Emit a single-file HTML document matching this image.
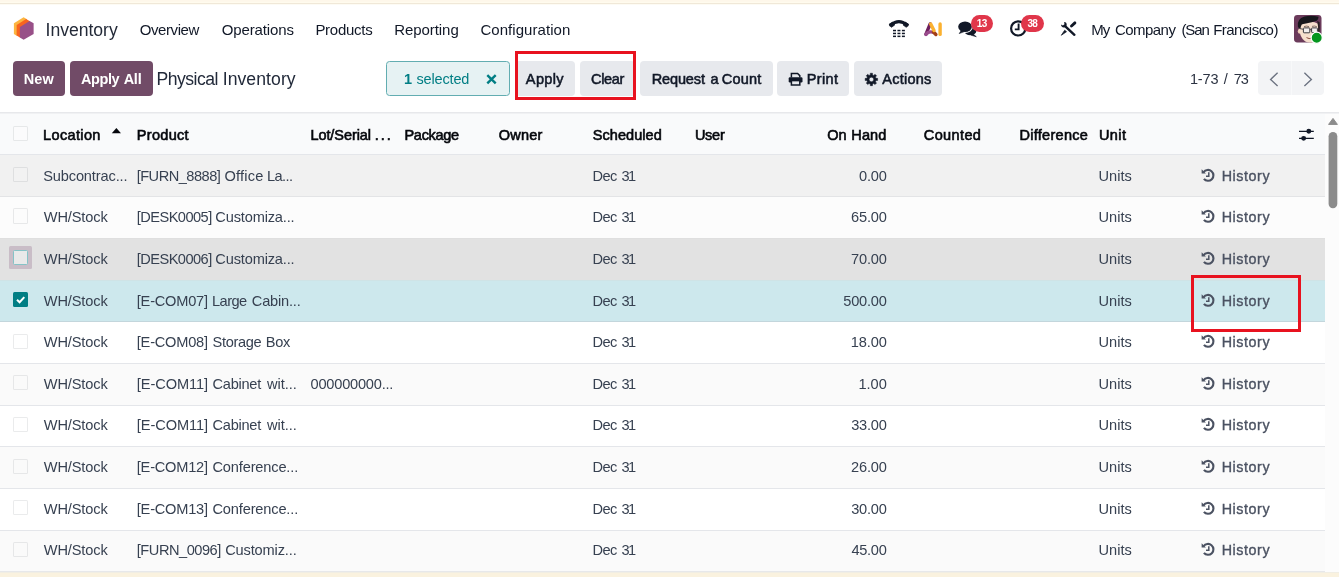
<!DOCTYPE html>
<html><head><meta charset="utf-8"><title>Physical Inventory</title><style>
html,body{margin:0;padding:0;}
body{width:1339px;height:577px;overflow:hidden;background:#fff;position:relative;font-family:"Liberation Sans",sans-serif;}
.t{position:absolute;white-space:nowrap;line-height:1;}
.b{position:absolute;box-sizing:border-box;}
svg{position:absolute;overflow:visible;}
#app{position:absolute;left:0;top:0;width:1339px;height:577px;overflow:hidden;will-change:transform;}
</style></head><body>
<div id="app">
<div class="b" style="left:0px;top:0px;width:1339px;height:1px;background:#fef7ea;"></div>
<div class="b" style="left:0px;top:1px;width:1339px;height:1px;background:#fef8eb;"></div>
<div class="b" style="left:0px;top:2px;width:1339px;height:1px;background:#fffbee;"></div>
<div class="b" style="left:0px;top:3px;width:1339px;height:1px;background:#f0e8d8;"></div>
<div class="b" style="left:0px;top:4px;width:1339px;height:1px;background:#fdfbf4;"></div>
<svg style="left:10px;top:14px;" width="28" height="30" viewBox="0 0 539 577.5"><polygon points="75,180 262,62 320,98 320,300 128,420 75,385" fill="#fcb540"/><polygon points="128,212 310,95 385,140 385,300 190,452 128,415" fill="#f8641f"/><polygon points="190,250 378,135 455,180 455,385 262,497 190,450" fill="#985088"/></svg>
<span class="t" style="font-size:17.6px;top:22px;color:#232a38;letter-spacing:-0.029px;left:45.59px;">Inventory</span>
<span class="t" style="font-size:15px;top:22px;color:#111827;letter-spacing:-0.408px;left:139.70px;">Overview</span>
<span class="t" style="font-size:15px;top:22px;color:#111827;letter-spacing:-0.116px;left:221.70px;">Operations</span>
<span class="t" style="font-size:15px;top:22px;color:#111827;letter-spacing:-0.262px;left:315.38px;">Products</span>
<span class="t" style="font-size:15px;top:22px;color:#111827;letter-spacing:-0.059px;left:394.18px;">Reporting</span>
<span class="t" style="font-size:15px;top:22px;color:#111827;letter-spacing:0.050px;left:480.45px;">Configuration</span>
<span class="t" style="font-size:15px;top:22px;color:#111827;letter-spacing:-0.966px;left:1091.18px;">My</span>
<span class="t" style="font-size:15px;top:22px;color:#111827;letter-spacing:-0.556px;left:1115.05px;">Company</span>
<span class="t" style="font-size:15px;top:22px;color:#111827;letter-spacing:-1.099px;left:1181.38px;">(San</span>
<span class="t" style="font-size:15px;top:22px;color:#111827;letter-spacing:-0.531px;left:1213.18px;">Francisco)</span>
<svg style="left:0px;top:0px;" width="1339" height="60" viewBox="0 0 1339 60"><path d="M890.6,25.0 Q898.9,18.2 907.2,25.0" fill="none" stroke="#111827" stroke-width="3.0" stroke-linecap="round"/><path d="M889.2,24.2 l3.6,-2.2 l1.9,3.0 l-3.3,2.3 z M908.6,24.2 l-3.6,-2.2 l-1.9,3.0 l3.3,2.3 z" fill="#111827" stroke="#111827" stroke-width="0.8" stroke-linejoin="round"/><rect x="893.00" y="29.80" width="3.0" height="1.5" fill="#111827"/><rect x="893.00" y="32.70" width="3.0" height="1.5" fill="#111827"/><rect x="893.00" y="35.60" width="3.0" height="1.5" fill="#111827"/><rect x="897.45" y="29.80" width="3.0" height="1.5" fill="#111827"/><rect x="897.45" y="32.70" width="3.0" height="1.5" fill="#111827"/><rect x="897.45" y="35.60" width="3.0" height="1.5" fill="#111827"/><rect x="901.90" y="29.80" width="3.0" height="1.5" fill="#111827"/><rect x="901.90" y="32.70" width="3.0" height="1.5" fill="#111827"/><rect x="901.90" y="35.60" width="3.0" height="1.5" fill="#111827"/></svg>
<svg style="left:0px;top:0px;" width="1339" height="60" viewBox="0 0 1339 60"><g fill="none" stroke-width="3.4" stroke-linecap="round" stroke-linejoin="round"><path d="M930.2,23.9 L925.9,34.3" stroke="#6d1f5e"/><path d="M925.9,34.4 Q928.6,30.9 932.9,32.2" stroke="#9a4c8d"/><path d="M933.4,32.0 L935.9,34.5" stroke="#a23e17"/><path d="M930.7,23.9 L934.0,30.4" stroke="#fbb130"/><path d="M940.1,24.0 L940.1,34.4" stroke="#fbb130"/></g></svg>
<svg style="left:0px;top:0px;" width="1339" height="60" viewBox="0 0 1339 60"><ellipse cx="970.3" cy="30.9" rx="6.0" ry="4.3" fill="#111827"/><path d="M973.0,34.0 l3.3,2.7 l-5.0,-1.4 z" fill="#111827" stroke="#111827" stroke-width="0.6" stroke-linejoin="round"/><ellipse cx="965.0" cy="26.8" rx="7.9" ry="6.2" fill="#fff"/><ellipse cx="965.05" cy="26.8" rx="6.85" ry="5.2" fill="#111827"/><path d="M961.2,30.6 l-2.0,3.0 l4.6,-1.8 z" fill="#111827" stroke="#111827" stroke-width="0.6" stroke-linejoin="round"/></svg>
<svg style="left:0px;top:0px;" width="1339" height="60" viewBox="0 0 1339 60"><circle cx="1018.2" cy="28.4" r="7.1" fill="none" stroke="#111827" stroke-width="2.2"/><path d="M1018.6,23.6 V29.4 H1014.8" fill="none" stroke="#111827" stroke-width="1.9"/></svg>
<div class="b" style="left:971.2px;top:14.7px;width:21.9px;height:17.5px;background:#e0364a;border-radius:9px;"></div>
<span class="t" style="font-size:10px;top:19px;color:#fff;letter-spacing:-0.341px;font-weight:700;left:976.63px;">13</span>
<div class="b" style="left:1021.1px;top:14.7px;width:22.8px;height:17.5px;background:#e0364a;border-radius:9px;"></div>
<span class="t" style="font-size:10px;top:19px;color:#fff;letter-spacing:-0.809px;font-weight:700;left:1027.38px;">38</span>
<svg style="left:0px;top:0px;" width="1339" height="60" viewBox="0 0 1339 60"><g fill="none" stroke="#111827" stroke-linecap="round"><path d="M1065.6,26.6 L1074.4,34.8" stroke-width="2.4"/><path d="M1074.9,22.9 L1071.5,26.0" stroke-width="2.9"/></g><path d="M1066.5,31.7 L1064.7,30.2 L1061.3,35.3 Z" fill="#111827" stroke="#111827" stroke-width="0.7" stroke-linejoin="round"/><path d="M1061.1,24.6 a2.8,2.8 0 1 0 3.0,-2.7 l0.4,2.4 l-1.6,1.2 z" fill="#111827"/></svg>
<svg style="left:1294.1px;top:15px;" width="27.5" height="27.5" viewBox="0 0 27.5 27.5"><rect x="0" y="0" width="27.5" height="27.5" rx="3.4" fill="#6b3b5b"/><ellipse cx="5.3" cy="16.3" rx="1.5" ry="2.4" fill="#efcdb6"/><path d="M5.3,11 Q4.8,19 8.6,24 Q11.5,27.5 15.5,27.5 L23,27.5 Q25.2,22 24.6,9 Q18,5 9,8 Z" fill="#f6dfcd"/><path d="M3.9,11.5 Q2.5,4 10.5,1.4 Q18,-0.2 24.6,1.8 Q24.5,4.5 22.8,5.8 Q18,7.4 12,8.4 Q8.7,8.8 7.7,9.6 Q6.7,11.5 6.5,14.2 Q4.6,13.6 3.9,11.5 Z" fill="#17171c"/><path d="M23.2,5.8 L25.6,7.2 Q26.2,13 25.2,18.5 L24.1,18.5 Q24.5,12 23.2,5.8 Z" fill="#2a2024"/><rect x="9.4" y="12.9" width="6.4" height="4.9" rx="0.7" fill="#f3efee" stroke="#3c3c40" stroke-width="1.0"/><rect x="17.6" y="12.9" width="5.8" height="4.7" rx="0.7" fill="#f3efee" stroke="#3c3c40" stroke-width="1.0"/><path d="M6.3,13.7 L9.4,14.3 M15.8,14.7 L17.6,14.7" stroke="#3c3c40" stroke-width="0.9"/><path d="M10,11.6 Q12.5,10.6 15,11.6 M18,11.4 Q20.5,10.6 22.8,11.6" stroke="#55443f" stroke-width="0.7" fill="none"/><path d="M12.5,22.6 Q15,24.3 18,23.1" stroke="#7a3b2e" stroke-width="0.9" fill="none"/></svg>
<svg style="left:0px;top:0px;" width="1339" height="60" viewBox="0 0 1339 60"><circle cx="1316.7" cy="37.8" r="5.6" fill="#05961f" stroke="#fff" stroke-width="1.3"/></svg>
<div class="b" style="left:12.7px;top:61.2px;width:52.3px;height:34.4px;background:#714b67;border-radius:4px;"></div>
<span class="t" style="font-size:14.5px;top:72px;color:#fff;letter-spacing:0.062px;font-weight:700;left:23.83px;">New</span>
<div class="b" style="left:69.8px;top:61.2px;width:82.8px;height:34.4px;background:#714b67;border-radius:4px;"></div>
<span class="t" style="font-size:14.5px;top:72px;color:#fff;letter-spacing:-0.390px;font-weight:700;left:80.94px;">Apply</span>
<span class="t" style="font-size:14.5px;top:72px;color:#fff;letter-spacing:-0.228px;font-weight:700;left:123.64px;">All</span>
<span class="t" style="font-size:17.6px;top:71px;color:#222a3a;letter-spacing:-0.515px;left:156.56px;">Physical</span>
<span class="t" style="font-size:17.6px;top:71px;color:#222a3a;letter-spacing:0.071px;left:222.69px;">Inventory</span>
<div class="b" style="left:385.7px;top:61px;width:124.3px;height:34.8px;background:#e6f2f3;border:1px solid #62adb1;border-radius:3.5px;"></div>
<span class="t" style="font-size:14.5px;top:72px;color:#017e84;letter-spacing:0.000px;font-weight:700;left:403.89px;">1</span>
<span class="t" style="font-size:14.5px;top:72px;color:#017e84;letter-spacing:-0.141px;left:416.41px;">selected</span>
<svg style="left:0px;top:40px;" width="1339" height="70" viewBox="0 40 1339 70"><path d="M487.3,75.2 L495.7,83.3 M495.7,75.2 L487.3,83.3" stroke="#017e84" stroke-width="2.4" fill="none"/></svg>
<div class="b" style="left:514.5px;top:61.2px;width:60.5px;height:34.4px;background:#e7e9ed;border-radius:4px;"></div>
<span class="t" style="font-size:14.5px;top:72px;color:#111827;letter-spacing:0.354px;-webkit-text-stroke:0.55px #111827;left:525.86px;">Apply</span>
<div class="b" style="left:579.8px;top:61.2px;width:55.7px;height:34.4px;background:#e7e9ed;border-radius:4px;"></div>
<span class="t" style="font-size:14.5px;top:72px;color:#111827;letter-spacing:-0.309px;-webkit-text-stroke:0.55px #111827;left:591.04px;">Clear</span>
<div class="b" style="left:639.9px;top:61.2px;width:133.1px;height:34.4px;background:#e7e9ed;border-radius:4px;"></div>
<span class="t" style="font-size:14.5px;top:72px;color:#111827;letter-spacing:-0.147px;-webkit-text-stroke:0.55px #111827;left:651.79px;">Request</span>
<span class="t" style="font-size:14.5px;top:72px;color:#111827;letter-spacing:0.000px;-webkit-text-stroke:0.55px #111827;left:710.47px;">a</span>
<span class="t" style="font-size:14.5px;top:72px;color:#111827;letter-spacing:0.219px;-webkit-text-stroke:0.55px #111827;left:721.84px;">Count</span>
<div class="b" style="left:777.4px;top:61.2px;width:71.9px;height:34.4px;background:#e7e9ed;border-radius:4px;"></div>
<span class="t" style="font-size:14.5px;top:72px;color:#111827;letter-spacing:0.330px;-webkit-text-stroke:0.55px #111827;left:806.79px;">Print</span>
<div class="b" style="left:853.8px;top:61.2px;width:88.7px;height:34.4px;background:#e7e9ed;border-radius:4px;"></div>
<span class="t" style="font-size:14.5px;top:72px;color:#111827;letter-spacing:0.222px;-webkit-text-stroke:0.55px #111827;left:882.36px;">Actions</span>
<svg style="left:0px;top:40px;" width="1339" height="70" viewBox="0 40 1339 70"><path d="M791.4,77.6 V73.4 H797.6 L799.8,75.6 V77.6" fill="none" stroke="#111827" stroke-width="1.5"/><rect x="788.7" y="77.2" width="13.8" height="5.2" rx="1.2" fill="#111827"/><rect x="791.4" y="80.6" width="8.4" height="4.4" fill="#e7e9ed" stroke="#111827" stroke-width="1.5"/></svg>
<svg style="left:0px;top:40px;" width="1339" height="70" viewBox="0 40 1339 70"><path d="M877.61,78.37 L877.61,80.53 L875.97,80.55 L875.41,81.91 L876.55,83.07 L875.02,84.60 L873.86,83.46 L872.50,84.02 L872.48,85.66 L870.32,85.66 L870.30,84.02 L868.94,83.46 L867.78,84.60 L866.25,83.07 L867.39,81.91 L866.83,80.55 L865.19,80.53 L865.19,78.37 L866.83,78.35 L867.39,76.99 L866.25,75.83 L867.78,74.30 L868.94,75.44 L870.30,74.88 L870.32,73.24 L872.48,73.24 L872.50,74.88 L873.86,75.44 L875.02,74.30 L876.55,75.83 L875.41,76.99 L875.97,78.35 Z M873.70,79.45 a2.3,2.3 0 1 0 -4.6,0 a2.3,2.3 0 1 0 4.6,0 Z" fill="#111827" fill-rule="evenodd" stroke="#111827" stroke-width="0.5" stroke-linejoin="round"/></svg>
<span class="t" style="font-size:14.5px;top:72px;color:#2c3342;letter-spacing:-0.099px;left:1189.91px;">1-73</span>
<span class="t" style="font-size:14.5px;top:72px;color:#2c3342;letter-spacing:0.000px;left:1223.80px;">/</span>
<span class="t" style="font-size:14.5px;top:72px;color:#2c3342;letter-spacing:-1.066px;left:1233.87px;">73</span>
<div class="b" style="left:1257.7px;top:61.4px;width:33.0px;height:34.0px;background:#f3f4f6;border-radius:4px 0 0 4px;"></div>
<div class="b" style="left:1291.3px;top:61.4px;width:32.7px;height:34.0px;background:#f3f4f6;border-radius:0 4px 4px 0;"></div>
<div class="b" style="left:1290.7px;top:61.4px;width:0.6px;height:34.0px;background:#f8f9fa;"></div>
<svg style="left:0px;top:40px;" width="1339" height="70" viewBox="0 40 1339 70"><path d="M1277.6,72.8 L1270.6,79.4 L1277.6,86.0 M1304.4,72.8 L1311.4,79.4 L1304.4,86.0" fill="none" stroke="#6b7280" stroke-width="1.35"/></svg>
<div class="b" style="left:0px;top:112px;width:1339px;height:1px;background:#e7e8eb;"></div>
<div class="b" style="left:0px;top:113px;width:1325px;height:41px;background:#f9fafb;"></div>
<div class="b" style="left:1325px;top:113px;width:14px;height:459px;background:#fcfcfc;"></div>
<div class="b" style="left:0px;top:113px;width:1339px;height:1px;background:#f0f1f3;"></div>
<div class="b" style="left:0px;top:154px;width:1325px;height:42px;background:#f1f1f1;border-top:1px solid #e4e6ea;"></div>
<div class="b" style="left:0px;top:196px;width:1325px;height:42px;background:#fcfcfc;border-top:1px solid #e3e4e6;"></div>
<div class="b" style="left:0px;top:238px;width:1325px;height:42px;background:#e2e2e2;border-top:1px solid #dfdfdf;"></div>
<div class="b" style="left:0px;top:280px;width:1325px;height:41px;background:#cde8ed;border-top:1px solid #cfe3e6;"></div>
<div class="b" style="left:0px;top:321px;width:1325px;height:42px;background:#ffffff;border-top:1px solid #c3d6dc;"></div>
<div class="b" style="left:0px;top:363px;width:1325px;height:42px;background:#fafafa;border-top:1px solid #e4e6ea;"></div>
<div class="b" style="left:0px;top:405px;width:1325px;height:41px;background:#ffffff;border-top:1px solid #e4e6ea;"></div>
<div class="b" style="left:0px;top:446px;width:1325px;height:42px;background:#fafafa;border-top:1px solid #e4e6ea;"></div>
<div class="b" style="left:0px;top:488px;width:1325px;height:42px;background:#ffffff;border-top:1px solid #e4e6ea;"></div>
<div class="b" style="left:0px;top:530px;width:1325px;height:42px;background:#fafafa;border-top:1px solid #e4e6ea;"></div>
<div class="b" style="left:0px;top:571px;width:1325px;height:1px;background:#e7e8ea;"></div>
<div class="b" style="left:0px;top:572px;width:1339px;height:1px;background:#f1eee4;"></div>
<div class="b" style="left:0px;top:573px;width:1339px;height:4px;background:#faf2df;"></div>
<span class="t" style="font-size:14.5px;top:128px;color:#05070c;letter-spacing:0.359px;-webkit-text-stroke:0.6px #05070c;left:43.06px;">Location</span>
<span class="t" style="font-size:14.5px;top:128px;color:#05070c;letter-spacing:0.302px;-webkit-text-stroke:0.6px #05070c;left:136.81px;">Product</span>
<span class="t" style="font-size:14.5px;top:128px;color:#05070c;letter-spacing:-0.068px;-webkit-text-stroke:0.6px #05070c;left:310.41px;">Lot/Serial</span>
<span class="t" style="font-size:14.5px;top:128px;color:#05070c;letter-spacing:1.966px;-webkit-text-stroke:0.6px #05070c;left:374.79px;">...</span>
<span class="t" style="font-size:14.5px;top:128px;color:#05070c;letter-spacing:-0.299px;-webkit-text-stroke:0.6px #05070c;left:404.51px;">Package</span>
<span class="t" style="font-size:14.5px;top:128px;color:#05070c;letter-spacing:0.201px;-webkit-text-stroke:0.6px #05070c;left:498.83px;">Owner</span>
<span class="t" style="font-size:14.5px;top:128px;color:#05070c;letter-spacing:0.043px;-webkit-text-stroke:0.6px #05070c;left:592.84px;">Scheduled</span>
<span class="t" style="font-size:14.5px;top:128px;color:#05070c;letter-spacing:-0.255px;-webkit-text-stroke:0.6px #05070c;left:694.89px;">User</span>
<span class="t" style="font-size:14.5px;top:128px;color:#05070c;letter-spacing:0.066px;-webkit-text-stroke:0.6px #05070c;left:827.23px;">On</span>
<span class="t" style="font-size:14.5px;top:128px;color:#05070c;letter-spacing:0.118px;-webkit-text-stroke:0.6px #05070c;left:851.31px;">Hand</span>
<span class="t" style="font-size:14.5px;top:128px;color:#05070c;letter-spacing:0.391px;-webkit-text-stroke:0.6px #05070c;left:923.77px;">Counted</span>
<span class="t" style="font-size:14.5px;top:128px;color:#05070c;letter-spacing:0.278px;-webkit-text-stroke:0.6px #05070c;left:1019.51px;">Difference</span>
<span class="t" style="font-size:14.5px;top:128px;color:#05070c;letter-spacing:0.441px;-webkit-text-stroke:0.6px #05070c;left:1098.89px;">Unit</span>
<svg style="left:0px;top:100px;" width="1339" height="60" viewBox="0 100 1339 60"><path d="M111.8,133.2 L116.4,128.0 L121.0,133.2 Z" fill="#05070c"/></svg>
<svg style="left:0px;top:100px;" width="1339" height="60" viewBox="0 100 1339 60"><g stroke="#111827" stroke-width="1.35" fill="#111827"><path d="M1299,131.3 H1313.8 M1299,138.35 H1313.8" fill="none"/><circle cx="1308.8" cy="131.3" r="2.45" stroke="none"/><circle cx="1303.65" cy="138.35" r="2.45" stroke="none"/></g></svg>
<svg style="left:1325px;top:113px;" width="14" height="110" viewBox="1325 113 14 110"><path d="M1328.6,124.4 L1333.0,118.4 L1337.4,124.4 Z" fill="#8b8b8b" stroke="#8b8b8b" stroke-width="1" stroke-linejoin="round"/><rect x="1328.6" y="132.0" width="8.7" height="76.2" rx="4.35" fill="#8b8b8b"/></svg>
<span class="t" style="font-size:14.6px;top:169px;color:#374151;letter-spacing:-0.126px;left:43.14px;">Subcontrac...</span>
<span class="t" style="font-size:14.6px;top:169px;color:#374151;letter-spacing:-0.506px;left:136.67px;">[FURN_8888]</span>
<span class="t" style="font-size:14.6px;top:169px;color:#374151;letter-spacing:0.217px;left:224.51px;">Office</span>
<span class="t" style="font-size:14.6px;top:169px;color:#374151;letter-spacing:-0.573px;left:267.01px;">La...</span>
<span class="t" style="font-size:14.6px;top:169px;color:#374151;letter-spacing:-0.495px;left:592.41px;">Dec</span>
<span class="t" style="font-size:14.6px;top:169px;color:#374151;letter-spacing:-1.569px;left:621.45px;">31</span>
<span class="t" style="font-size:14.6px;top:169px;color:#374151;letter-spacing:-0.239px;left:859.09px;">0.00</span>
<span class="t" style="font-size:14.6px;top:169px;color:#374151;letter-spacing:-0.027px;left:1098.58px;">Units</span>
<span class="t" style="font-size:14.3px;top:169px;color:#4b5262;letter-spacing:0.561px;-webkit-text-stroke:0.35px #4b5262;left:1221.70px;">History</span>
<div class="b" style="left:12.5px;top:166.75px;width:15.2px;height:15.2px;background:rgba(255,255,255,0.12);border:1px solid rgba(17,24,39,0.085);border-radius:1.5px;"></div>
<span class="t" style="font-size:14.6px;top:210px;color:#374151;letter-spacing:-0.118px;left:43.74px;">WH/Stock</span>
<span class="t" style="font-size:14.6px;top:210px;color:#374151;letter-spacing:-0.539px;left:136.77px;">[DESK0005]</span>
<span class="t" style="font-size:14.6px;top:210px;color:#374151;letter-spacing:-0.168px;left:215.37px;">Customiza...</span>
<span class="t" style="font-size:14.6px;top:210px;color:#374151;letter-spacing:-0.495px;left:592.41px;">Dec</span>
<span class="t" style="font-size:14.6px;top:210px;color:#374151;letter-spacing:-1.569px;left:621.45px;">31</span>
<span class="t" style="font-size:14.6px;top:210px;color:#374151;letter-spacing:-0.205px;left:851.07px;">65.00</span>
<span class="t" style="font-size:14.6px;top:210px;color:#374151;letter-spacing:-0.027px;left:1098.58px;">Units</span>
<span class="t" style="font-size:14.3px;top:210px;color:#4b5262;letter-spacing:0.561px;-webkit-text-stroke:0.35px #4b5262;left:1221.70px;">History</span>
<div class="b" style="left:12.5px;top:208.44px;width:15.2px;height:15.2px;background:rgba(255,255,255,0.12);border:1px solid rgba(17,24,39,0.085);border-radius:1.5px;"></div>
<span class="t" style="font-size:14.6px;top:252px;color:#374151;letter-spacing:-0.118px;left:43.74px;">WH/Stock</span>
<span class="t" style="font-size:14.6px;top:252px;color:#374151;letter-spacing:-0.539px;left:136.77px;">[DESK0006]</span>
<span class="t" style="font-size:14.6px;top:252px;color:#374151;letter-spacing:-0.168px;left:215.37px;">Customiza...</span>
<span class="t" style="font-size:14.6px;top:252px;color:#374151;letter-spacing:-0.495px;left:592.41px;">Dec</span>
<span class="t" style="font-size:14.6px;top:252px;color:#374151;letter-spacing:-1.569px;left:621.45px;">31</span>
<span class="t" style="font-size:14.6px;top:252px;color:#374151;letter-spacing:-0.205px;left:851.07px;">70.00</span>
<span class="t" style="font-size:14.6px;top:252px;color:#374151;letter-spacing:-0.027px;left:1098.58px;">Units</span>
<span class="t" style="font-size:14.3px;top:252px;color:#4b5262;letter-spacing:0.561px;-webkit-text-stroke:0.35px #4b5262;left:1221.70px;">History</span>
<div class="b" style="left:8.6px;top:246.23px;width:23.4px;height:23.0px;background:#c9bdc7;border-radius:1.5px;"></div>
<div class="b" style="left:12.7px;top:250.13px;width:15.4px;height:15.0px;background:#e9e9e9;border:1px solid #86c3c7;border-radius:1.5px;"></div>
<span class="t" style="font-size:14.6px;top:294px;color:#374151;letter-spacing:-0.118px;left:43.74px;">WH/Stock</span>
<span class="t" style="font-size:14.6px;top:294px;color:#374151;letter-spacing:-0.213px;left:136.77px;">[E-COM07]</span>
<span class="t" style="font-size:14.6px;top:294px;color:#374151;letter-spacing:-0.521px;left:212.01px;">Large</span>
<span class="t" style="font-size:14.6px;top:294px;color:#374151;letter-spacing:-0.205px;left:251.87px;">Cabin...</span>
<span class="t" style="font-size:14.6px;top:294px;color:#374151;letter-spacing:-0.495px;left:592.41px;">Dec</span>
<span class="t" style="font-size:14.6px;top:294px;color:#374151;letter-spacing:-1.569px;left:621.45px;">31</span>
<span class="t" style="font-size:14.6px;top:294px;color:#374151;letter-spacing:-0.247px;left:843.37px;">500.00</span>
<span class="t" style="font-size:14.6px;top:294px;color:#374151;letter-spacing:-0.027px;left:1098.58px;">Units</span>
<span class="t" style="font-size:14.3px;top:294px;color:#4b5262;letter-spacing:0.561px;-webkit-text-stroke:0.35px #4b5262;left:1221.70px;">History</span>
<div class="b" style="left:12.7px;top:291.82px;width:15.1px;height:15.0px;background:#017e84;border-radius:1.5px;"></div>
<svg style="left:12.7px;top:291.82px;" width="15.2" height="15" viewBox="0 0 15.2 15"><path d="M4.0,7.7 L6.6,10.2 L11.3,5.1" fill="none" stroke="#fff" stroke-width="2"/></svg>
<span class="t" style="font-size:14.6px;top:335px;color:#374151;letter-spacing:-0.118px;left:43.74px;">WH/Stock</span>
<span class="t" style="font-size:14.6px;top:335px;color:#374151;letter-spacing:-0.213px;left:136.77px;">[E-COM08]</span>
<span class="t" style="font-size:14.6px;top:335px;color:#374151;letter-spacing:-0.335px;left:212.54px;">Storage</span>
<span class="t" style="font-size:14.6px;top:335px;color:#374151;letter-spacing:-0.348px;left:265.81px;">Box</span>
<span class="t" style="font-size:14.6px;top:335px;color:#374151;letter-spacing:-0.495px;left:592.41px;">Dec</span>
<span class="t" style="font-size:14.6px;top:335px;color:#374151;letter-spacing:-1.569px;left:621.45px;">31</span>
<span class="t" style="font-size:14.6px;top:335px;color:#374151;letter-spacing:-0.111px;left:850.69px;">18.00</span>
<span class="t" style="font-size:14.6px;top:335px;color:#374151;letter-spacing:-0.027px;left:1098.58px;">Units</span>
<span class="t" style="font-size:14.3px;top:335px;color:#4b5262;letter-spacing:0.561px;-webkit-text-stroke:0.35px #4b5262;left:1221.70px;">History</span>
<div class="b" style="left:12.5px;top:333.51px;width:15.2px;height:15.2px;background:rgba(255,255,255,0.12);border:1px solid rgba(17,24,39,0.085);border-radius:1.5px;"></div>
<span class="t" style="font-size:14.6px;top:377px;color:#374151;letter-spacing:-0.118px;left:43.74px;">WH/Stock</span>
<span class="t" style="font-size:14.6px;top:377px;color:#374151;letter-spacing:-0.079px;left:136.77px;">[E-COM11]</span>
<span class="t" style="font-size:14.6px;top:377px;color:#374151;letter-spacing:-0.245px;left:212.47px;">Cabinet</span>
<span class="t" style="font-size:14.6px;top:377px;color:#374151;letter-spacing:-0.064px;left:267.03px;">wit...</span>
<span class="t" style="font-size:14.6px;top:377px;color:#374151;letter-spacing:-0.212px;left:310.54px;">000000000...</span>
<span class="t" style="font-size:14.6px;top:377px;color:#374151;letter-spacing:-0.495px;left:592.41px;">Dec</span>
<span class="t" style="font-size:14.6px;top:377px;color:#374151;letter-spacing:-1.569px;left:621.45px;">31</span>
<span class="t" style="font-size:14.6px;top:377px;color:#374151;letter-spacing:-0.056px;left:858.54px;">1.00</span>
<span class="t" style="font-size:14.6px;top:377px;color:#374151;letter-spacing:-0.027px;left:1098.58px;">Units</span>
<span class="t" style="font-size:14.3px;top:377px;color:#4b5262;letter-spacing:0.561px;-webkit-text-stroke:0.35px #4b5262;left:1221.70px;">History</span>
<div class="b" style="left:12.5px;top:375.2px;width:15.2px;height:15.2px;background:rgba(255,255,255,0.12);border:1px solid rgba(17,24,39,0.085);border-radius:1.5px;"></div>
<span class="t" style="font-size:14.6px;top:418px;color:#374151;letter-spacing:-0.118px;left:43.74px;">WH/Stock</span>
<span class="t" style="font-size:14.6px;top:418px;color:#374151;letter-spacing:-0.079px;left:136.77px;">[E-COM11]</span>
<span class="t" style="font-size:14.6px;top:418px;color:#374151;letter-spacing:-0.245px;left:212.47px;">Cabinet</span>
<span class="t" style="font-size:14.6px;top:418px;color:#374151;letter-spacing:-0.064px;left:267.03px;">wit...</span>
<span class="t" style="font-size:14.6px;top:418px;color:#374151;letter-spacing:-0.495px;left:592.41px;">Dec</span>
<span class="t" style="font-size:14.6px;top:418px;color:#374151;letter-spacing:-1.569px;left:621.45px;">31</span>
<span class="t" style="font-size:14.6px;top:418px;color:#374151;letter-spacing:-0.252px;left:851.25px;">33.00</span>
<span class="t" style="font-size:14.6px;top:418px;color:#374151;letter-spacing:-0.027px;left:1098.58px;">Units</span>
<span class="t" style="font-size:14.3px;top:418px;color:#4b5262;letter-spacing:0.561px;-webkit-text-stroke:0.35px #4b5262;left:1221.70px;">History</span>
<div class="b" style="left:12.5px;top:416.89px;width:15.2px;height:15.2px;background:rgba(255,255,255,0.12);border:1px solid rgba(17,24,39,0.085);border-radius:1.5px;"></div>
<span class="t" style="font-size:14.6px;top:460px;color:#374151;letter-spacing:-0.118px;left:43.74px;">WH/Stock</span>
<span class="t" style="font-size:14.6px;top:460px;color:#374151;letter-spacing:-0.213px;left:136.77px;">[E-COM12]</span>
<span class="t" style="font-size:14.6px;top:460px;color:#374151;letter-spacing:-0.155px;left:212.47px;">Conference...</span>
<span class="t" style="font-size:14.6px;top:460px;color:#374151;letter-spacing:-0.495px;left:592.41px;">Dec</span>
<span class="t" style="font-size:14.6px;top:460px;color:#374151;letter-spacing:-1.569px;left:621.45px;">31</span>
<span class="t" style="font-size:14.6px;top:460px;color:#374151;letter-spacing:-0.209px;left:851.08px;">26.00</span>
<span class="t" style="font-size:14.6px;top:460px;color:#374151;letter-spacing:-0.027px;left:1098.58px;">Units</span>
<span class="t" style="font-size:14.3px;top:460px;color:#4b5262;letter-spacing:0.561px;-webkit-text-stroke:0.35px #4b5262;left:1221.70px;">History</span>
<div class="b" style="left:12.5px;top:458.58px;width:15.2px;height:15.2px;background:rgba(255,255,255,0.12);border:1px solid rgba(17,24,39,0.085);border-radius:1.5px;"></div>
<span class="t" style="font-size:14.6px;top:502px;color:#374151;letter-spacing:-0.118px;left:43.74px;">WH/Stock</span>
<span class="t" style="font-size:14.6px;top:502px;color:#374151;letter-spacing:-0.213px;left:136.77px;">[E-COM13]</span>
<span class="t" style="font-size:14.6px;top:502px;color:#374151;letter-spacing:-0.155px;left:212.47px;">Conference...</span>
<span class="t" style="font-size:14.6px;top:502px;color:#374151;letter-spacing:-0.495px;left:592.41px;">Dec</span>
<span class="t" style="font-size:14.6px;top:502px;color:#374151;letter-spacing:-1.569px;left:621.45px;">31</span>
<span class="t" style="font-size:14.6px;top:502px;color:#374151;letter-spacing:-0.252px;left:851.25px;">30.00</span>
<span class="t" style="font-size:14.6px;top:502px;color:#374151;letter-spacing:-0.027px;left:1098.58px;">Units</span>
<span class="t" style="font-size:14.3px;top:502px;color:#4b5262;letter-spacing:0.561px;-webkit-text-stroke:0.35px #4b5262;left:1221.70px;">History</span>
<div class="b" style="left:12.5px;top:500.27px;width:15.2px;height:15.2px;background:rgba(255,255,255,0.12);border:1px solid rgba(17,24,39,0.085);border-radius:1.5px;"></div>
<span class="t" style="font-size:14.6px;top:543px;color:#374151;letter-spacing:-0.118px;left:43.74px;">WH/Stock</span>
<span class="t" style="font-size:14.6px;top:543px;color:#374151;letter-spacing:-0.466px;left:136.77px;">[FURN_0096]</span>
<span class="t" style="font-size:14.6px;top:543px;color:#374151;letter-spacing:-0.142px;left:225.17px;">Customiz...</span>
<span class="t" style="font-size:14.6px;top:543px;color:#374151;letter-spacing:-0.495px;left:592.41px;">Dec</span>
<span class="t" style="font-size:14.6px;top:543px;color:#374151;letter-spacing:-1.569px;left:621.45px;">31</span>
<span class="t" style="font-size:14.6px;top:543px;color:#374151;letter-spacing:-0.306px;left:851.47px;">45.00</span>
<span class="t" style="font-size:14.6px;top:543px;color:#374151;letter-spacing:-0.027px;left:1098.58px;">Units</span>
<span class="t" style="font-size:14.3px;top:543px;color:#4b5262;letter-spacing:0.561px;-webkit-text-stroke:0.35px #4b5262;left:1221.70px;">History</span>
<div class="b" style="left:12.5px;top:541.96px;width:15.2px;height:15.2px;background:rgba(255,255,255,0.12);border:1px solid rgba(17,24,39,0.085);border-radius:1.5px;"></div>
<svg style="left:0px;top:0px;" width="1339" height="577" viewBox="0 0 1339 577"><g transform="translate(1208.2,175.25)" fill="none" stroke="#4b5262" stroke-width="2.15"><path d="M-4.6,-3.0 A5.4,5.4 0 1 1 -4.3,3.6"/><path d="M-6.6,-6.0 V-1.7 H-2.3 Z" fill="#4b5262" stroke="none"/><path d="M0.6,-2.9 V0.9 H-2.2" stroke-width="1.5"/></g><g transform="translate(1208.2,216.25)" fill="none" stroke="#4b5262" stroke-width="2.15"><path d="M-4.6,-3.0 A5.4,5.4 0 1 1 -4.3,3.6"/><path d="M-6.6,-6.0 V-1.7 H-2.3 Z" fill="#4b5262" stroke="none"/><path d="M0.6,-2.9 V0.9 H-2.2" stroke-width="1.5"/></g><g transform="translate(1208.2,258.25)" fill="none" stroke="#4b5262" stroke-width="2.15"><path d="M-4.6,-3.0 A5.4,5.4 0 1 1 -4.3,3.6"/><path d="M-6.6,-6.0 V-1.7 H-2.3 Z" fill="#4b5262" stroke="none"/><path d="M0.6,-2.9 V0.9 H-2.2" stroke-width="1.5"/></g><g transform="translate(1208.2,300.25)" fill="none" stroke="#4b5262" stroke-width="2.15"><path d="M-4.6,-3.0 A5.4,5.4 0 1 1 -4.3,3.6"/><path d="M-6.6,-6.0 V-1.7 H-2.3 Z" fill="#4b5262" stroke="none"/><path d="M0.6,-2.9 V0.9 H-2.2" stroke-width="1.5"/></g><g transform="translate(1208.2,341.25)" fill="none" stroke="#4b5262" stroke-width="2.15"><path d="M-4.6,-3.0 A5.4,5.4 0 1 1 -4.3,3.6"/><path d="M-6.6,-6.0 V-1.7 H-2.3 Z" fill="#4b5262" stroke="none"/><path d="M0.6,-2.9 V0.9 H-2.2" stroke-width="1.5"/></g><g transform="translate(1208.2,383.25)" fill="none" stroke="#4b5262" stroke-width="2.15"><path d="M-4.6,-3.0 A5.4,5.4 0 1 1 -4.3,3.6"/><path d="M-6.6,-6.0 V-1.7 H-2.3 Z" fill="#4b5262" stroke="none"/><path d="M0.6,-2.9 V0.9 H-2.2" stroke-width="1.5"/></g><g transform="translate(1208.2,424.25)" fill="none" stroke="#4b5262" stroke-width="2.15"><path d="M-4.6,-3.0 A5.4,5.4 0 1 1 -4.3,3.6"/><path d="M-6.6,-6.0 V-1.7 H-2.3 Z" fill="#4b5262" stroke="none"/><path d="M0.6,-2.9 V0.9 H-2.2" stroke-width="1.5"/></g><g transform="translate(1208.2,466.25)" fill="none" stroke="#4b5262" stroke-width="2.15"><path d="M-4.6,-3.0 A5.4,5.4 0 1 1 -4.3,3.6"/><path d="M-6.6,-6.0 V-1.7 H-2.3 Z" fill="#4b5262" stroke="none"/><path d="M0.6,-2.9 V0.9 H-2.2" stroke-width="1.5"/></g><g transform="translate(1208.2,508.25)" fill="none" stroke="#4b5262" stroke-width="2.15"><path d="M-4.6,-3.0 A5.4,5.4 0 1 1 -4.3,3.6"/><path d="M-6.6,-6.0 V-1.7 H-2.3 Z" fill="#4b5262" stroke="none"/><path d="M0.6,-2.9 V0.9 H-2.2" stroke-width="1.5"/></g><g transform="translate(1208.2,549.25)" fill="none" stroke="#4b5262" stroke-width="2.15"><path d="M-4.6,-3.0 A5.4,5.4 0 1 1 -4.3,3.6"/><path d="M-6.6,-6.0 V-1.7 H-2.3 Z" fill="#4b5262" stroke="none"/><path d="M0.6,-2.9 V0.9 H-2.2" stroke-width="1.5"/></g></svg>
<div class="b" style="left:12.5px;top:126.0px;width:15.2px;height:15.2px;background:rgba(255,255,255,0.3);border:1px solid rgba(17,24,39,0.085);border-radius:1.5px;"></div>
<div class="b" style="left:515.1px;top:51.1px;width:120.8px;height:48.6px;background:transparent;border:3px solid #e8121f;"></div>
<div class="b" style="left:1191.1px;top:275.0px;width:109.8px;height:56.8px;background:transparent;border:3px solid #e8121f;"></div>
</div>
</body></html>
